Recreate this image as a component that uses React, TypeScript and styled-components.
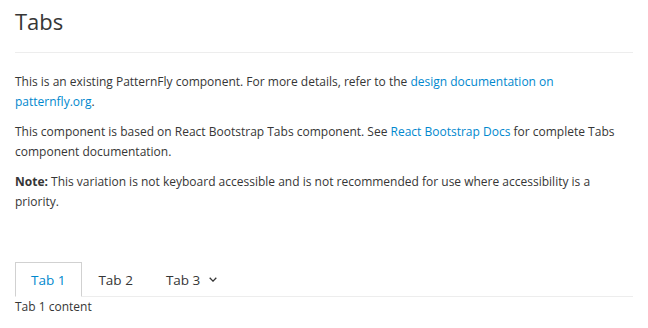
import React from "react";
import styled, { createGlobalStyle } from "styled-components";

const Global = createGlobalStyle`
  html, body { margin: 0; padding: 0; background: #fff; }
  body {
    font-family: "Open Sans", "Liberation Sans", sans-serif;
    font-size: 12px;
    line-height: 20px;
    color: #363636;
  }
  * { box-sizing: border-box; }
`;

const Page = styled.div`
  padding: 0 15px;
`;

const Header = styled.div`
  border-bottom: 1px solid #ededed;
  padding-bottom: 18px;
  margin-bottom: 19px;
`;

const Title = styled.h1`
  margin: 8px 0 0;
  font-size: 22px;
  font-weight: 400;
  line-height: 26px;
  color: #363636;
`;

const Para = styled.p`
  margin: 0 0 10px;
`;

const Link = styled.a`
  color: #0088ce;
  text-decoration: none;
`;

const TabBar = styled.ul`
  display: flex;
  list-style: none;
  margin: 50px 0 0;
  padding: 0;
  border-bottom: 1px solid #ededed;
`;

const Tab = styled.li<{ $active?: boolean }>`
  display: flex;
  align-items: center;
  gap: 9px;
  height: 35px;
  margin-bottom: -1px;
  padding: 0 16px 0 15px;
  font-size: 13.5px;
  color: ${(p) => (p.$active ? "#0088ce" : "#363636")};
  background: ${(p) => (p.$active ? "#fff" : "transparent")};
  border: 1px solid ${(p) => (p.$active ? "#d1d1d1" : "transparent")};
  border-bottom-color: ${(p) => (p.$active ? "#fff" : "transparent")};
`;

const Content = styled.div`
  padding-top: 0;
`;

const Chevron = () => (
  <svg width="8" height="5" viewBox="0 0 8 5" fill="none">
    <path d="M0.7 0.7L4 4.1L7.3 0.7" stroke="#363636" strokeWidth="1.3" />
  </svg>
);

export default function App() {
  return (
    <>
      <Global />
      <Page>
        <Header>
          <Title>Tabs</Title>
        </Header>
        <Para>
          This is an existing PatternFly component. For more details, refer to the{" "}
          <Link href="#">design documentation on patternfly.org</Link>.
        </Para>
        <Para>
          This component is based on React Bootstrap Tabs component. See{" "}
          <Link href="#">React Bootstrap Docs</Link> for complete Tabs component documentation.
        </Para>
        <Para>
          <strong>Note:</strong> This variation is not keyboard accessible and is not recommended
          for use where accessibility is a priority.
        </Para>
        <TabBar>
          <Tab $active>Tab 1</Tab>
          <Tab>Tab 2</Tab>
          <Tab>
            Tab 3 <Chevron />
          </Tab>
        </TabBar>
        <Content>Tab 1 content</Content>
      </Page>
    </>
  );
}
